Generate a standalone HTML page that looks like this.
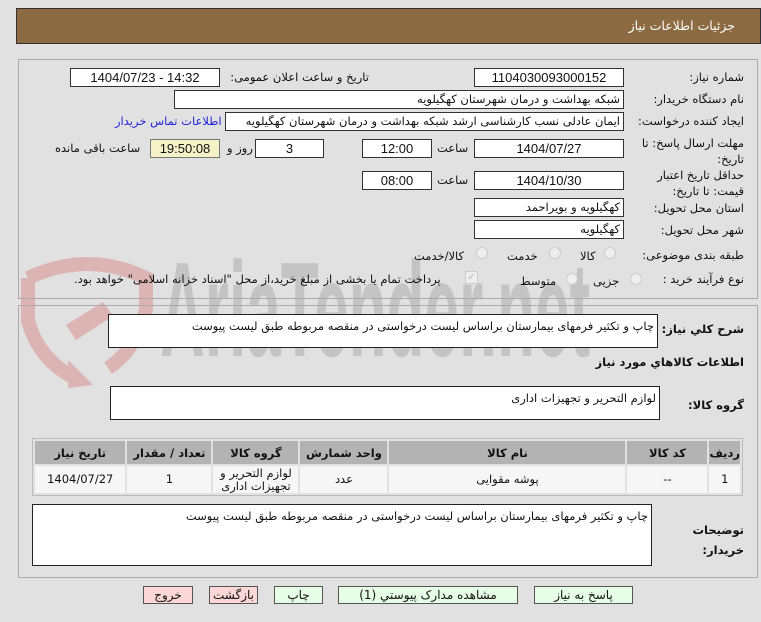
<!DOCTYPE html>
<html><head><meta charset="utf-8"><style>
*{margin:0;padding:0;box-sizing:border-box}
body{width:761px;height:622px;background:#e1e1e1;font-family:"DejaVu Sans","Liberation Sans",sans-serif;font-size:12px;color:#111;position:relative;overflow:hidden}
.a{position:absolute}
.hd{left:16px;top:8px;width:745px;height:36px;background:#8d6b42;border:1px solid #333;color:#fff;font-size:12.5px}
.pn{border:1px solid #aaa}
.bx{position:absolute;background:#fff;border:1px solid #333;height:19px;line-height:17px;text-align:center;font-size:13px;font-family:"Liberation Sans","DejaVu Sans",sans-serif;white-space:nowrap;overflow:hidden}
.r{direction:rtl;text-align:right;padding-right:3px;font-family:"DejaVu Sans",sans-serif;font-size:11.5px}
.l{position:absolute;direction:rtl;white-space:nowrap;font-size:11.5px}
.ta{position:absolute;background:#fff;border:1px solid #222;direction:rtl;text-align:right;padding:4px 3px;font-size:11.5px}
.rd{position:absolute;width:12px;height:12px;border-radius:50%;border:1px solid #ccc;background:#eee}
table{position:absolute;left:32px;top:438px;width:711px;border-collapse:separate;border-spacing:2px;border:1px solid #bbb;direction:rtl;font-size:11.5px}
th{background:#b3b3b3;height:23px;font-weight:bold}
td{background:#f6f6f6;height:27px;text-align:center;line-height:13px}
.bt{position:absolute;top:586px;height:18px;border:1px solid #555;text-align:center;line-height:16px;font-size:12px;background:#e6fde6}
</style></head><body>
<div class="a hd"><span class="a" style="right:25px;top:9px">جزئیات اطلاعات نیاز</span></div>

<svg class="a" style="left:18px;top:250px" width="135" height="140" viewBox="0 0 135 140"><path d="M10 28 Q70 0 128 28 L128 60 Q118 100 90 118 M10 28 L10 70 Q20 110 60 130" fill="none" stroke="#dcb4b4" stroke-width="14"/><path d="M48 75 L85 52 L95 66 L58 90Z" fill="#dcb4b4"/><path d="M50 110 L75 135 L50 138Z" fill="#dcb4b4"/></svg>
<div class="a" style="left:160px;top:232px;font-size:135px;font-weight:bold;color:#c4c4c4;font-family:'Liberation Sans',sans-serif;transform:scale(0.46,1);transform-origin:0 0;white-space:nowrap">AriaTender.net</div>

<div class="a pn" style="left:18px;top:59px;width:740px;height:240px"></div>
<div class="a pn" style="left:18px;top:305px;width:740px;height:273px"></div>

<div class="l" style="right:17px;top:70px">شماره نیاز:</div>
<div class="bx" style="left:474px;top:68px;width:150px">1104030093000152</div>
<div class="l" style="right:392px;top:70px">تاریخ و ساعت اعلان عمومی:</div>
<div class="bx" style="left:70px;top:68px;width:150px">1404/07/23 - 14:32</div>

<div class="l" style="right:17px;top:92px">نام دستگاه خریدار:</div>
<div class="bx r" style="left:174px;top:90px;width:450px">شبکه بهداشت و درمان شهرستان کهگیلویه</div>

<div class="l" style="right:17px;top:114px">ایجاد کننده درخواست:</div>
<div class="bx r" style="left:225px;top:112px;width:399px">ایمان عادلی نسب کارشناسی ارشد شبکه بهداشت و درمان شهرستان کهگیلویه</div>
<div class="l" style="left:115px;top:114px;color:#2222dd">اطلاعات تماس خریدار</div>

<div class="l" style="right:17px;top:135px;line-height:16px">مهلت ارسال پاسخ: تا<br>تاریخ:</div>
<div class="bx" style="left:474px;top:139px;width:150px">1404/07/27</div>
<div class="l" style="left:437px;top:141px">ساعت</div>
<div class="bx" style="left:362px;top:139px;width:70px">12:00</div>
<div class="bx" style="left:255px;top:139px;width:69px">3</div>
<div class="l" style="left:227px;top:141px">روز و</div>
<div class="bx" style="left:150px;top:139px;width:70px;background:#f5f2c8;border-color:#777">19:50:08</div>
<div class="l" style="left:55px;top:141px">ساعت باقی مانده</div>

<div class="l" style="right:17px;top:167px;line-height:16px">حداقل تاریخ اعتبار<br>قیمت: تا تاریخ:</div>
<div class="bx" style="left:474px;top:171px;width:150px">1404/10/30</div>
<div class="l" style="left:437px;top:173px">ساعت</div>
<div class="bx" style="left:362px;top:171px;width:70px">08:00</div>

<div class="l" style="right:17px;top:201px">استان محل تحویل:</div>
<div class="bx r" style="left:474px;top:198px;width:150px">کهگیلویه و بویراحمد</div>
<div class="l" style="right:17px;top:223px">شهر محل تحویل:</div>
<div class="bx r" style="left:474px;top:220px;width:150px">کهگیلویه</div>

<div class="l" style="right:17px;top:248px">طبقه بندی موضوعی:</div>
<div class="rd" style="left:604px;top:247px"></div><div class="l" style="left:580px;top:249px">کالا</div>
<div class="rd" style="left:549px;top:247px"></div><div class="l" style="left:507px;top:249px">خدمت</div>
<div class="rd" style="left:476px;top:247px"></div><div class="l" style="left:414px;top:249px">کالا/خدمت</div>

<div class="l" style="right:17px;top:272px">نوع فرآیند خرید :</div>
<div class="rd" style="left:630px;top:273px"></div><div class="l" style="left:593px;top:274px">جزیی</div>
<div class="rd" style="left:566px;top:273px"></div><div class="l" style="left:520px;top:274px">متوسط</div>
<div class="a" style="left:465px;top:271px;width:13px;height:13px;border:1px solid #ccc;background:#eee;color:#bbb;font-size:10px;line-height:11px;text-align:center">✓</div>
<div class="l" style="left:74px;top:272px">پرداخت تمام یا بخشی از مبلغ خرید،از محل "اسناد خزانه اسلامی" خواهد بود.</div>

<div class="l" style="right:17px;top:322px;font-weight:bold">شرح کلي نياز:</div>
<div class="ta" style="left:108px;top:314px;width:550px;height:34px">چاپ و تکثیر فرمهای بیمارستان براساس لیست درخواستی در منقصه مربوطه طبق لیست پیوست</div>
<div class="l" style="right:17px;top:355px;font-weight:bold">اطلاعات کالاهاي مورد نياز</div>
<div class="l" style="right:17px;top:398px;font-weight:bold">گروه کالا:</div>
<div class="ta" style="left:110px;top:386px;width:550px;height:34px">لوازم التحرير و تجهيزات اداری</div>

<table>
<tr><th style="width:24px">رديف</th><th style="width:80px">کد کالا</th><th style="width:236px">نام کالا</th><th style="width:87px">واحد شمارش</th><th style="width:85px">گروه کالا</th><th style="width:84px">تعداد / مقدار</th><th>تاريخ نياز</th></tr>
<tr><td>1</td><td>--</td><td>پوشه مقوایی</td><td>عدد</td><td>لوازم التحرير و<br>تجهيزات اداری</td><td>1</td><td>1404/07/27</td></tr>
</table>

<div class="l" style="right:17px;top:520px;font-weight:bold;line-height:20px">توضیحات<br>خریدار:</div>
<div class="ta" style="left:32px;top:504px;width:620px;height:62px">چاپ و تکثیر فرمهای بیمارستان براساس لیست درخواستی در منقصه مربوطه طبق لیست پیوست</div>

<div class="bt" style="left:534px;width:99px">پاسخ به نیاز</div>
<div class="bt" style="left:338px;width:180px">مشاهده مدارک پیوستي (1)</div>
<div class="bt" style="left:274px;width:49px">چاپ</div>
<div class="bt" style="left:209px;width:49px;background:#fcd7d7">بازگشت</div>
<div class="bt" style="left:143px;width:50px;background:#fcd7d7">خروج</div>
</body></html>
